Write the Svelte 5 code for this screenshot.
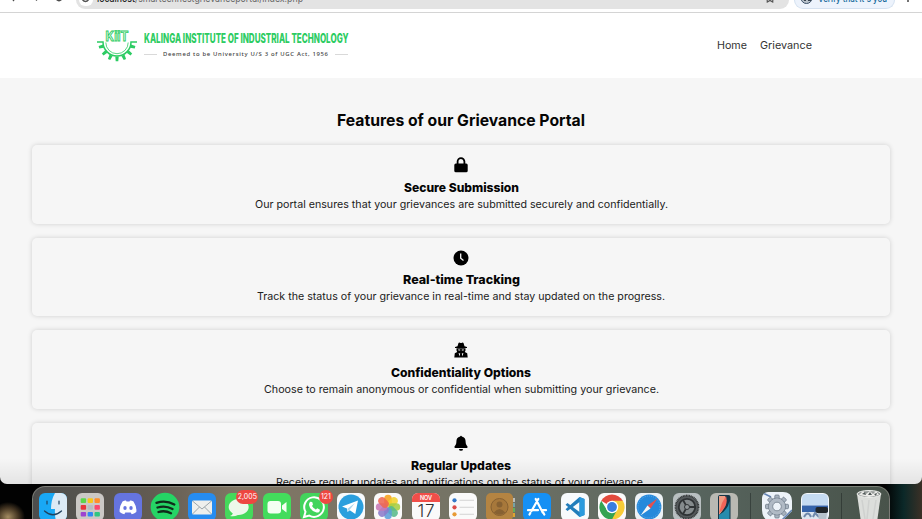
<script>
  const features = [
    { icon: 'lock', title: 'Secure Submission', text: 'Our portal ensures that your grievances are submitted securely and confidentially.', tw: 115, w: 413 },
    { icon: 'clock', title: 'Real-time Tracking', text: 'Track the status of your grievance in real-time and stay updated on the progress.', tw: 117, w: 408 },
    { icon: 'spy', title: 'Confidentiality Options', text: 'Choose to remain anonymous or confidential when submitting your grievance.', tw: 140, w: 395 },
    { icon: 'bell', title: 'Regular Updates', text: 'Receive regular updates and notifications on the status of your grievance.', tw: 100, w: 370 }
  ];
  const apps = ['finder', 'launchpad', 'discord', 'spotify', 'mail', 'messages', 'facetime', 'whatsapp', 'telegram', 'photos', 'calendar', 'reminders', 'contacts', 'appstore', 'vscode', 'chrome', 'safari', 'settings', 'phone'];
  const pads = ['#5ad64b', '#f8c51c', '#ff8d2b', '#e8353c', '#b9bcc0', '#fa4770', '#9d43d0', '#3187f5', '#2fc681'];
  const petals = ['#f7a01d', '#f3d22c', '#a5cd43', '#57b98b', '#5c9ed8', '#8b7bc9', '#c777b5', '#ee6652'];
  const teeth = [-75, -50, -25, 0, 25, 50, 75];
  const cogs = [0, 45, 90, 135, 180, 225, 270, 315];
</script>

{#snippet line(text, width, size, weight, height, color)}
  <svg class="line" {width} {height} role="img" aria-label={text}>
    <text x="0" y={height * 0.72} font-size={size} font-weight={weight} fill={color} textLength={width} lengthAdjust="spacingAndGlyphs">{text}</text>
  </svg>
{/snippet}

<div class="screen">
  <div class="window">
    <div class="browser">
      <svg class="nav" width="80" height="12" viewBox="0 0 80 12" fill="none" stroke="#4b4b4b" stroke-width="1.3">
        <path d="M15 -2L12 -1.500L14 1M36 .5L38 -1.500M56 -1Q59 2.500 62 -1" />
      </svg>
      <div class="address">
        <span class="site"><svg width="11" height="12" viewBox="0 0 11 12"><path d="M2 -1Q5.500 4 9 -1" fill="none" stroke="#555" stroke-width="1.500" /></svg></span>
        <svg class="url" width="206" height="8" viewBox="0 0 206 8"><text x="0" y="2.300" font-size="10" fill="#666" textLength="206" lengthAdjust="spacingAndGlyphs"><tspan fill="#222" font-weight="500">localhost</tspan>/smartechnestgrievanceportal/index.php</text></svg>
        <svg class="star" width="8" height="8" viewBox="0 0 8 8"><path d="M1 -3L1.300 2L4 .4L6.700 2L7 -3" fill="none" stroke="#555" stroke-width="1.200" /></svg>
      </div>
      <div class="verify">
        <svg width="13" height="8" viewBox="0 0 13 8"><circle cx="6.500" cy="-2" r="5.500" fill="#b9c2cb" stroke="#3c526a" /><path d="M3 -3h3v4H4zM8 -3h3v4H8z" fill="#394450" /></svg>
        <svg class="vtext" width="69" height="8" viewBox="0 0 69 8"><text x="0" y="2" font-size="9.500" font-weight="500" fill="#16699b" textLength="69" lengthAdjust="spacingAndGlyphs">Verify that it's you</text></svg>
      </div>
      <i class="more"></i>
    </div>

    <header>
      <div class="brand">
        <svg width="42" height="34" viewBox="0 0 42 34">
          <g transform="translate(21 12.500)" stroke="#2ccc63" fill="none">
            {#each teeth as a}
              <path d="M-1.700 14L-1.300 18.700H1.300L1.700 14Z" transform="rotate({a})" fill="#2ccc63" stroke="none" />
            {/each}
            <path d="M-20 -.5H-14A14 14 0 0 0 14 -.5H20" stroke-width="1.500" />
            <path d="M-11.200 0A11.200 11.200 0 0 0 11.200 0" stroke-width=".8" />
          </g>
          <text x="9.500" y="11.300" font-size="13" font-weight="700" fill="#e9faee" stroke="#2ccc63" stroke-width=".9" textLength="23" lengthAdjust="spacingAndGlyphs">KiiT</text>
        </svg>
        <div class="words">
          <svg width="206" height="15" viewBox="0 0 206 15"><text x="0" y="12" font-size="12.700" font-weight="800" fill="#2dcc62" textLength="204.500" lengthAdjust="spacingAndGlyphs">KALINGA INSTITUTE OF INDUSTRIAL TECHNOLOGY</text></svg>
          <div class="sub"><i></i><svg width="166" height="10" viewBox="0 0 166 10"><text class="noto" x="0" y="7" font-size="5.900" font-weight="500" fill="#3e3e3e" textLength="165">Deemed to be University U/S 3 of UGC Act, 1956</text></svg><i></i></div>
        </div>
      </div>
      <nav>
        {@render line('Home', 30, 10.7, 400, 16, '#333')}
        {@render line('Grievance', 52, 10.7, 400, 16, '#333')}
      </nav>
    </header>

    <main>
      <h1>{@render line('Features of our Grievance Portal', 248, 16, 700, 24, '#050505')}</h1>
      {#each features as f}
        <section>
          <svg class="glyph" width="16" height="16" viewBox="0 0 16 16">
            {#if f.icon === 'lock'}
              <path d="M4.600 7V4.500a3.400 3.400 0 0 1 6.800 0V7" fill="none" stroke="#000" stroke-width="1.800" /><rect x="1.300" y="6.500" width="13.400" height="8.700" rx="1.500" />
            {:else if f.icon === 'clock'}
              <circle cx="8" cy="8" r="7.500" /><path d="M7.700 3.500V8.300L10.500 10.500" fill="none" stroke="#f6f6f6" stroke-width="1.300" />
            {:else if f.icon === 'spy'}
              <path d="M4.500 4.200L5.500 1Q6 .2 7 .8Q8 1.300 9 .8Q10 .2 10.500 1L11.500 4.200L14 5V6H2V5Z" /><path d="M3.500 6.200H12.500V8.500L11.800 10L14.200 11.200L14.700 15.500H1.300L1.800 11.200L4.200 10L3.500 8.500Z" /><path d="M5 7.500h2.200v1.100h-1.700zM8.800 7.500h2.200l-.5 1.100h-1.700zM5.600 11L7.200 11.600L6.500 14.500ZM10.400 11L8.800 11.600L9.500 14.500Z" fill="#f6f6f6" />
            {:else}
              <path d="M7.200 1.500a.8.800 0 0 1 1.600 0C11.600 2 12.600 4 12.600 6.500C12.600 9.300 13.500 10.300 14.500 11.500Q15 12.800 13.800 13H2.200Q1 12.800 1.500 11.500C2.500 10.300 3.400 9.300 3.400 6.500C3.400 4 4.400 2 7.200 1.500ZM6 13.900H10A2 1.900 0 0 1 6 13.900Z" />
            {/if}
          </svg>
          <h2>{@render line(f.title, f.tw, 12.3, 800, 18, '#050505')}</h2>
          <p>{@render line(f.text, f.w, 10.5, 400, 16, '#202020')}</p>
        </section>
      {/each}
    </main>
  </div>

  <div class="dock">
    {#each apps as app}
      <div class="app">
        <svg width="28" height="28" viewBox="0 0 28 28">
          {#if app === 'finder'}
            <rect width="28" height="28" rx="6" fill="#19a8f5" /><path d="M16 0H22a6 6 0 0 1 6 6V22a6 6 0 0 1-6 6H17Q15.500 22 16 16H12Q12 7 16 0Z" fill="#dceaf5" /><path d="M8 8v3M20 8v3M5.500 18Q14 25.500 22.500 18" fill="none" stroke="#20425f" stroke-width="1.200" stroke-linecap="round" />
          {:else if app === 'launchpad'}
            <rect width="28" height="28" rx="6" fill="#cbc8c5" />
            {#each pads as c, i}<rect x={4.7 + (i % 3) * 6.9} y={5.3 + Math.floor(i / 3) * 6.8} width="5.400" height="4.600" rx="1" fill={c} />{/each}
          {:else if app === 'discord'}
            <rect width="28" height="28" rx="6" fill="#6574df" /><path d="M8.500 8.500Q10.500 7.300 12 7.500L12.500 8.500H15.500L16 7.500Q17.500 7.300 19.500 8.500Q23 14 22.300 19Q20 21 17.700 21.200L16.700 19.500H11.300L10.300 21.200Q8 21 5.700 19Q5 14 8.500 8.500Z" fill="#fff" /><ellipse cx="11" cy="15" rx="1.700" ry="1.900" fill="#6574df" /><ellipse cx="17" cy="15" rx="1.700" ry="1.900" fill="#6574df" />
          {:else if app === 'spotify'}
            <circle cx="14" cy="14" r="14.300" fill="#25d465" /><path d="M5.500 9.800Q15 6.800 23.300 11.500M6.500 14.500Q14.500 12 21.500 16M7.500 19Q14 17 20 20.200" fill="none" stroke="#102c1b" stroke-width="2.300" stroke-linecap="round" />
          {:else if app === 'mail'}
            <rect width="28" height="28" rx="6" fill="#268cf0" /><rect x="4" y="7.500" width="20" height="14" rx="1.500" fill="#eeefed" /><path d="M4.500 8L14 16L23.500 8M4.500 21L11.500 14M23.500 21L16.500 14" fill="none" stroke="#9ba5aa" />
          {:else if app === 'messages'}
            <rect width="28" height="28" rx="6" fill="#45d95b" /><path d="M5 23Q7.500 22 7.800 20.500A10 8 0 1 1 13 22Q9 24 5 23Z" fill="#edf8ea" />
          {:else if app === 'facetime'}
            <rect width="28" height="28" rx="6" fill="#43dc5c" /><rect x="4.500" y="8" width="13.500" height="12.500" rx="3" fill="#f4fff2" /><path d="M19 12.500L23.500 9V19.500L19 16Z" fill="#f4fff2" />
          {:else if app === 'whatsapp'}
            <rect width="28" height="28" rx="6" fill="#42d45c" /><path d="M4 24L5.500 18.800A9.800 9.800 0 1 1 9.300 22.600Z" fill="none" stroke="#fff" stroke-width="2" /><path d="M10.200 8.800L12.200 9L13 11.500L12 13Q13.500 15.700 16 16.500L17.200 15.300L20 16.700Q19.500 20 16.500 19.500Q10 17.500 9 12Q8.900 10 10.200 8.800Z" fill="#fff" />
          {:else if app === 'telegram'}
            <rect width="28" height="28" rx="6" fill="#f7fafc" /><circle cx="14" cy="14" r="12.500" fill="#2b9fdd" /><path d="M5 13.500L21 7.500L18.300 21L12.800 17.200L10.500 19L10 15.500Z" fill="#fff" /><path d="M10.500 15.700L18 10L12.800 16.500L11 18Z" fill="#a8d4ec" />
          {:else if app === 'photos'}
            <rect width="28" height="28" rx="6" fill="#fafafa" />
            {#each petals as c, i}<rect x="10.200" y="1.800" width="7.600" height="11.700" rx="3.800" fill={c} opacity=".88" transform="rotate({i * 45} 14 14)" />{/each}
          {:else if app === 'calendar'}
            <rect width="28" height="28" rx="6" fill="#fafafa" /><path d="M0 9V6A6 6 0 0 1 6 0H22A6 6 0 0 1 28 6V9Z" fill="#f04e49" /><text x="14" y="6.900" font-size="5.500" font-weight="600" text-anchor="middle" fill="#fff">NOV</text><text x="14" y="24" font-size="17" font-weight="300" text-anchor="middle" fill="#303030" textLength="17">17</text>
          {:else if app === 'reminders'}
            <rect width="28" height="28" rx="6" fill="#fafafa" /><circle cx="5.500" cy="7.300" r="2.100" fill="#3479c8" /><circle cx="5.500" cy="14.300" r="2.100" fill="#db4b48" /><circle cx="5.500" cy="21.300" r="2.100" fill="#e79b35" /><path d="M10.500 7.300H25M10.500 14.300H25M10.500 21.300H25" stroke="#ccc" stroke-width=".8" />
          {:else if app === 'contacts'}
            <path d="M24 5h5v4h-5z" fill="#bcbdb9" /><path d="M24 10h5v4h-5z" fill="#76a3a5" /><path d="M24 15h5v4h-5z" fill="#65ad58" /><path d="M24 20h5v4h-5z" fill="#dda432" /><rect width="27" height="28" rx="5" fill="#b48442" /><circle cx="13.500" cy="14" r="8.500" fill="#a7783b" stroke="#876132" /><circle cx="13.500" cy="11.500" r="3" fill="#876132" /><path d="M7.800 19.500Q13.500 12.500 19.200 19.500Q13.500 24 7.800 19.500Z" fill="#876132" />
          {:else if app === 'appstore'}
            <rect width="28" height="28" rx="6" fill="#1690f4" /><path d="M12.700 6L19.700 19.500M15.300 6L8.500 18M5 17.200H15M18.500 17.200H23M7.300 20L6.500 21.500M20.500 20L21.300 21.500" stroke="#fff" stroke-width="2.200" stroke-linecap="round" />
          {:else if app === 'vscode'}
            <rect width="28" height="28" rx="6" fill="#f7fafc" /><path d="M18.500 4L23.500 6V22L18.500 24L4.500 11.700L6.500 10L18.500 19V9L6.500 18L4.500 16.300Z" fill="#217dbb" /><path d="M18.500 4L23.500 6V22L18.500 24Z" fill="#2b9add" />
          {:else if app === 'chrome'}
            <rect width="28" height="28" rx="6" fill="#fafafa" /><path d="M14 14L3.200 7.700A12.500 12.500 0 0 1 24.800 7.700Z" fill="#e34a3d" /><path d="M14 14V26.500A12.500 12.500 0 0 0 24.800 7.700H14Z" fill="#f8cc38" /><path d="M3.200 7.700L9 17L14 14L19 17L14 26.500A12.500 12.500 0 0 1 3.200 7.700Z" fill="#35a352" /><circle cx="14" cy="14" r="6.200" fill="#fff" /><circle cx="14" cy="14" r="4.900" fill="#397edf" />
          {:else if app === 'safari'}
            <rect width="28" height="28" rx="6" fill="#edf2f5" /><circle cx="14" cy="14" r="12.400" fill="#2689db" /><circle cx="14" cy="14" r="11" fill="none" stroke="#8bc6ed" stroke-dasharray=".5 1.500" /><path d="M22.500 5.500L12.500 12.500L15.500 15.500Z" fill="#e7504e" /><path d="M5.500 22.500L12.500 12.500L15.500 15.500Z" fill="#f5f7f8" />
          {:else if app === 'settings'}
            <rect width="28" height="28" rx="6" fill="#b8bfc1" /><circle cx="14" cy="14" r="11.500" fill="#555a5c" stroke="#333738" stroke-width="1.800" stroke-dasharray="1 .6" /><circle cx="14" cy="14" r="8.200" fill="#858b8d" stroke="#2f3335" stroke-width="1.800" /><path d="M14 14H22M14 14L10 7M14 14L10 21" stroke="#303436" stroke-width="1.800" /><circle cx="14" cy="14" r="2.500" fill="#909698" stroke="#303436" />
          {:else}
            <rect width="28" height="28" rx="6" fill="#b9b9b3" /><rect x="8" y="2" width="12.500" height="26" rx="2" fill="#153547" /><path d="M9 3H15Q19 11 9 22Z" fill="#ee9c83" /><path d="M19.500 8Q18 17 9 22V27H19.500Z" fill="#278cad" /><path d="M16 3Q19 13 9 20L12 10Z" fill="#f26558" />
          {/if}
        </svg>
        {#if app === 'messages'}<span class="badge wide">2,005</span>{/if}
        {#if app === 'whatsapp'}<span class="badge">121</span>{/if}
      </div>
    {/each}
    <i class="sep"></i>
    <svg class="automator" width="30" height="30" viewBox="0 0 30 30">
      <path d="M0 0H21Q30 0 30 9V19L19 30H10Q0 28 0 18Z" fill="#edf3f9" /><path d="M1 1L9 5M30 18L19 29" stroke="#6484b4" stroke-width="1.500" />
      <g transform="translate(15 14.500)" fill="#a9b4c0" stroke="#657381" stroke-width=".7">{#each cogs as a}<rect x="-2.200" y="-11.500" width="4.400" height="5" rx="1" transform="rotate({a})" />{/each}<circle r="8.500" /></g>
      <circle cx="15" cy="14.500" r="8" fill="#b0bac5" /><circle cx="15" cy="14.500" r="4.300" fill="#edf3f9" stroke="#657381" stroke-width=".7" />
    </svg>
    <svg class="preview" width="28" height="28" viewBox="0 0 28 28">
      <rect width="28" height="28" rx="6" fill="#f5f8fc" /><path d="M1 6Q1 1 6 1H22Q27 1 27 6V12.500H1Z" fill="#c5dbf2" /><path d="M1 12.500H27V20H1Z" fill="#3563aa" /><path d="M1 19H27V28H1Z" fill="#dce5ef" /><path d="M3 24Q7 17 10 24M12 24L14 20L18 24" fill="none" stroke="#6f89ab" stroke-width="2" /><rect x="14.500" y="14" width="12.500" height="6" rx="2" fill="#20262b" /><path d="M17 20H26L25 28H18Z" fill="#b6c2cc" />
    </svg>
    <i class="sep second"></i>
    <svg class="trash" width="26" height="32" viewBox="0 0 26 32">
      <path d="M1 4H25L21 32H5Z" fill="#dcdedb" /><ellipse cx="13" cy="4" rx="12" ry="3.500" fill="#969b99" stroke="#eceeeb" /><path d="M3 5L7 1L10 4L14 1L17 4L20 1L23 5L13 7Z" fill="#ecece9" /><path d="M6 4L9 2L10 5ZM12 5L14 2L16 5ZM18 4L21 3L20 6Z" fill="#515a59" /><path d="M6 10L9 29M13 10L11 29M20 10L17 29" stroke="#cfd1cf" stroke-width="1.500" />
    </svg>
  </div>
</div>

<style>
  :global(body) { margin: 0; overflow: hidden; }
  * { box-sizing: border-box; }
  .screen { position: relative; width: 922px; height: 519px; overflow: hidden; background: radial-gradient(ellipse 17px 15px at 8px 517px, #a38b61, #453623 60%, transparent), linear-gradient(90deg, #020202 0 96%, #0b2828 98%, #3b3026); font-family: Inter, "Open Sans", sans-serif; }
  .window { position: relative; height: 484px; overflow: hidden; border-radius: 0 0 7px 7px; background: #f6f6f6; }
  .window::after { content: ''; position: absolute; inset: auto 0 0; height: 26px; background: linear-gradient(transparent, rgba(0, 0, 0, .075)); }
  .browser { display: flex; align-items: flex-start; height: 13px; border-bottom: 1px solid #d4d4d4; background: #fff; overflow: hidden; }
  .nav { flex: none; margin-right: -4px; }
  .address { flex: none; display: flex; align-items: flex-start; width: 713px; height: 9px; padding-left: 3px; background: #e3e3e3; border-radius: 0 0 10px 10px; overflow: hidden; }
  .site { flex: none; width: 14px; height: 6px; margin-right: 4px; background: #fff; border-radius: 0 0 7px 7px; overflow: hidden; }
  .site svg { display: block; margin-left: 1px; }
  .star { margin: 0 14px 0 auto; }
  .star { margin-right: 15px; }
  .address, .verify { line-height: 0; }
  .verify { flex: none; display: flex; width: 101px; height: 9px; margin-left: 5px; padding-left: 5px; background: #edf3fc; border: solid #d5e1f0; border-width: 0 1px 1px; border-radius: 0 0 10px 10px; overflow: hidden; }
  .vtext { margin-left: 5px; }
  .more { flex: none; width: 2px; height: 2px; margin-left: 12px; background: #444; border-radius: 50%; }
  header { display: flex; justify-content: space-between; height: 65px; padding: 17px 110px 0 96px; background: #fff; }
  .brand { display: flex; gap: 6px; }
  .words { padding-top: 1px; }
  .words svg { display: block; }
  .noto { font-family: "Noto Sans", sans-serif; }
  .sub { display: flex; align-items: center; gap: 6px; margin-top: 3px; }
  .sub i { width: 13px; height: 1px; background: #d9d9d9; }
  nav { display: flex; gap: 13px; padding-top: 7px; }
  .line { display: block; overflow: visible; }
  main { display: flex; flex-direction: column; gap: 14px; padding: 30px 32px; }
  h1, h2, p { display: flex; justify-content: center; margin: 0; }
  h1 { height: 23px; padding-top: 1px; }
  section { display: flex; flex-direction: column; align-items: center; flex: none; height: 78.700px; padding-top: 12px; border-radius: 5px; box-shadow: 0 0 5px rgba(0, 0, 0, .16); }
  .glyph { display: block; margin-bottom: 5.500px; }
  h2 { height: 17px; }
  .dock { position: absolute; left: 32px; top: 486px; display: flex; align-items: flex-start; width: 858px; height: 48px; padding: 6px 6px 0; border: 1px solid rgba(170, 170, 160, .5); border-radius: 13px 13px 0 0; background: linear-gradient(90deg, #4c4d4c, #625b52 14%, #817665 24%, #747365 50%, #596660 75%, #48534a); }
  .app { position: relative; flex: none; width: 28px; height: 28px; margin-right: 9.280px; }
  .app svg { display: block; overflow: visible; }
  .badge { position: absolute; top: -3px; right: -5px; height: 14px; min-width: 14px; padding: 0 1px; border-radius: 7px; background: #ed4741; color: #fff; font-size: 7px; line-height: 14px; text-align: center; }
  .badge.wide { min-width: 22px; }
  .sep { flex: none; width: 1px; height: 30px; margin: 0 11px 0 3px; background: rgba(25, 30, 28, .45); }
  .sep.second { margin: 0 14px 0 12px; }
  .automator { flex: none; margin: -1px 9px 0 0; border-radius: 6px; }
  .preview, .trash { flex: none; }
  .trash { margin-top: -3px; }
</style>
